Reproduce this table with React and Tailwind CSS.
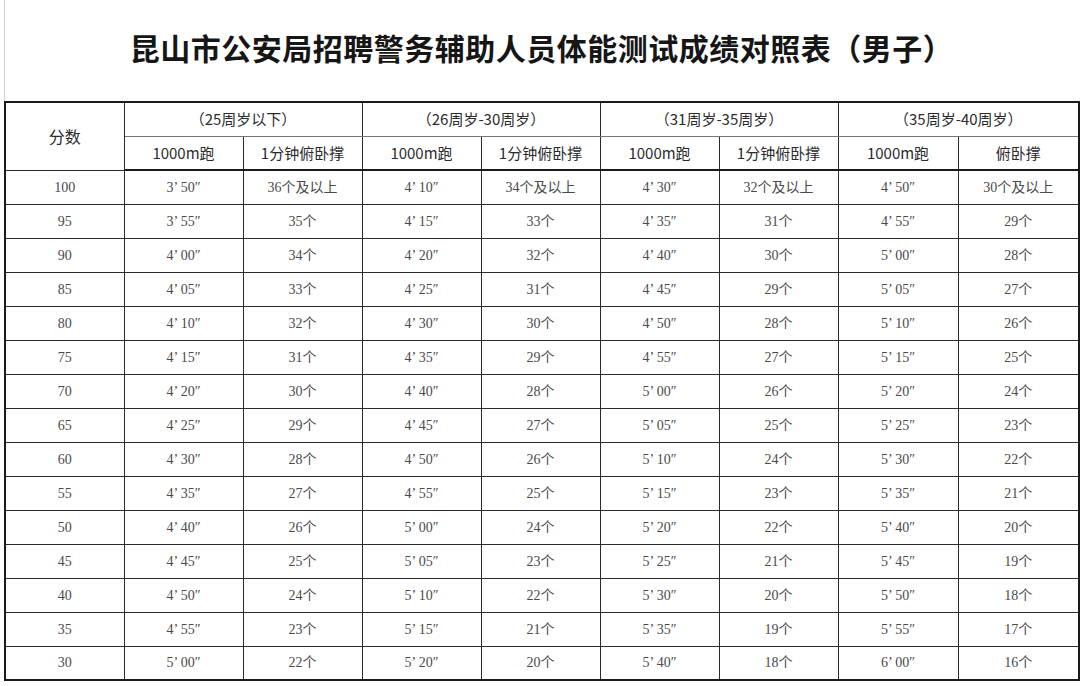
import React from 'react';

const groups = ['（25周岁以下）', '（26周岁-30周岁）', '（31周岁-35周岁）', '（35周岁-40周岁）'];
const subHeads = ['1000m跑', '1分钟俯卧撑', '1000m跑', '1分钟俯卧撑', '1000m跑', '1分钟俯卧撑', '1000m跑', '俯卧撑'];
const widths = [119, 119, 119, 119, 119, 119, 119, 120, 121];

// 成绩：每组起始跑步秒数 + 俯卧撑个数，每档 +5 秒 / -1 个
const scores = [100, 95, 90, 85, 80, 75, 70, 65, 60, 55, 50, 45, 40, 35, 30];
const runStart = [230, 250, 270, 290];
const pushStart = [36, 34, 32, 30];

function fmt(sec) {
  const m = Math.floor(sec / 60);
  const s = String(sec % 60).padStart(2, '0');
  return `${m}’ ${s}″`;
}

const rows = scores.map((score, i) => {
  const cells = [];
  for (let g = 0; g < 4; g++) {
    cells.push(fmt(runStart[g] + i * 5));
    cells.push(i === 0 ? `${pushStart[g]}个及以上` : `${pushStart[g] - i}个`);
  }
  return { score, cells };
});

const headFont = { fontFamily: '"Noto Sans CJK SC", "Noto Sans", sans-serif' };
const dataFont = { fontFamily: '"Liberation Serif", "Noto Sans CJK SC", serif' };

export default function App() {
  return (
    <div className="w-[1080px] h-[686px] bg-white">
      <div className="ml-[4px] w-[1074px] border-l border-[#cfcfcf]">
        <div className="h-[101px] flex items-center justify-center pb-[6px]">
          <h1
            className="text-[30px] font-bold text-[#161616] tracking-[0.5px]"
            style={headFont}
          >
            昆山市公安局招聘警务辅助人员体能测试成绩对照表（男子）
          </h1>
        </div>
      </div>
      <table className="ml-[4px] w-[1074px] table-fixed border-collapse border-2 border-[#1a1a1a]">
        <colgroup>
          {widths.map((w, i) => (
            <col key={i} style={{ width: w }} />
          ))}
        </colgroup>
        <thead style={headFont} className="text-[#2b2b2b]">
          <tr className="h-[34px]">
            <th rowSpan={2} className="border border-[#2a2a2a] text-[16px] font-normal">
              分数
            </th>
            {groups.map((g) => (
              <th key={g} colSpan={2} className="border border-[#2a2a2a] border-b-[#777] text-[15px] font-normal">
                {g}
              </th>
            ))}
          </tr>
          <tr className="h-[34px]">
            {subHeads.map((h, i) => (
              <th key={i} className="border border-[#2a2a2a] border-b-2 border-b-[#1a1a1a] text-[15px] font-normal">
                {h}
              </th>
            ))}
          </tr>
        </thead>
        <tbody style={dataFont} className="text-[#4a4a4a] text-[14px]">
          {rows.map((r) => (
            <tr key={r.score} className="h-[34px]">
              <td className="border border-[#2a2a2a] text-center">{r.score}</td>
              {r.cells.map((c, i) => (
                <td key={i} className="border border-[#2a2a2a] text-center">
                  {c}
                </td>
              ))}
            </tr>
          ))}
        </tbody>
      </table>
    </div>
  );
}
